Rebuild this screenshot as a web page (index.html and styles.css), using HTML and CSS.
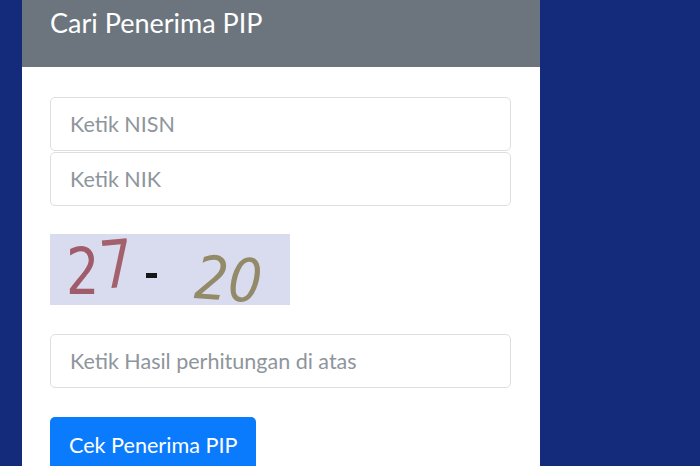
FILE: index.html
```html
<!DOCTYPE html>
<html lang="id">
<head>
<meta charset="utf-8">
<title>Cari Penerima PIP</title>
<link rel="stylesheet" href="styles.css">
</head>
<body>
<div class="page">
  <div class="card">
    <div class="card-header">Cari Penerima PIP</div>
    <form class="card-body">
      <div class="stack">
        <input class="field" type="text" placeholder="Ketik NISN">
        <input class="field" type="text" placeholder="Ketik NIK">
      </div>
      <div class="captcha" aria-label="27 - 20">
        <span class="digit d-2a">2</span>
        <span class="digit d-7">7</span>
        <span class="dash"></span>
        <span class="digit d-20">20</span>
      </div>
      <input class="field" type="text" placeholder="Ketik Hasil perhitungan di atas">
      <div class="actions">
        <button class="btn" type="button">Cek Penerima PIP</button>
      </div>
    </form>
  </div>
</div>
</body>
</html>
```
FILE: styles.css
```css
* { box-sizing: border-box; }
html, body { margin: 0; padding: 0; height: 100%; }
body {
  background: #142b7b;
  font-family: "Lato", "Noto Sans", sans-serif;
  overflow: hidden;
}
.page {
  padding-left: 22px;
  height: 100%;
}
.card {
  width: 518px;
  height: 100%;
  background: #ffffff;
}
.card-header {
  background: #6c757d;
  color: #ffffff;
  height: 67px;
  padding: 6px 0 0 28px;
  font-size: 27px;
  line-height: 34px;
}
.card-body {
  padding: 30px 29px 0 28px;
  display: flex;
  flex-direction: column;
}
.stack {
  display: flex;
  flex-direction: column;
  gap: 1px;
}
.field {
  display: block;
  width: 100%;
  height: 54px;
  border: 1px solid #dcdfe2;
  border-radius: 5px;
  padding: 0 19px;
  font-family: inherit;
  font-size: 21.5px;
  color: #495057;
  background: #fff;
  outline: none;
}
.field::placeholder { color: #8e959c; }
.captcha {
  margin: 28px 0 29px;
  width: 240px;
  height: 71px;
  background: #d9dcee;
  position: relative;
  font-family: "DejaVu Sans", sans-serif;
}
.digit {
  position: absolute;
  line-height: 1;
  transform-origin: 0 0;
}
.d-2a {
  left: 16px;
  top: 6px;
  font-size: 64px;
  color: #a15c6b;
  transform: scale(0.82, 1);
}
.d-7 {
  left: 47px;
  top: 0;
  font-size: 66px;
  color: #a3606d;
  transform: rotate(-5deg) scale(0.8, 1);
}
.dash {
  position: absolute;
  left: 96px;
  top: 39px;
  width: 11px;
  height: 5px;
  background: #161616;
}
.d-20 {
  left: 147px;
  top: 13px;
  font-size: 60px;
  font-style: italic;
  color: #928a69;
  transform: rotate(4deg) scale(0.88, 1);
}
.actions { margin-top: 29px; }
.btn {
  background: #0a7bfd;
  color: #fff;
  border: none;
  border-radius: 5px;
  height: 56px;
  padding: 0 19px;
  font-family: inherit;
  font-size: 21.6px;
}
```
